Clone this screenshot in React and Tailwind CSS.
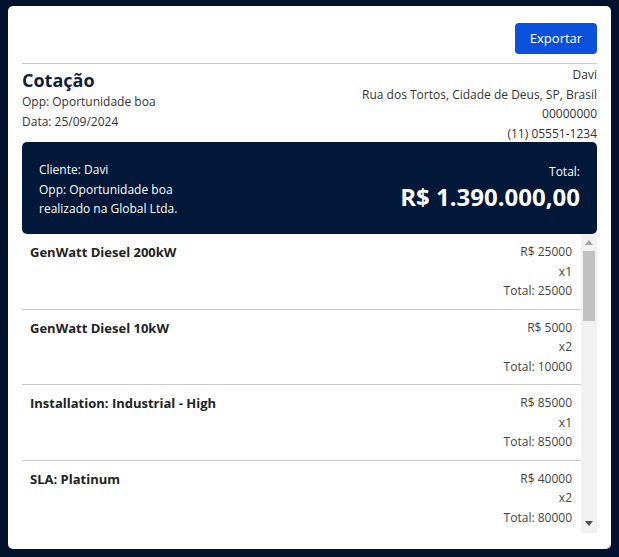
import React from "react";

const items = [
  { name: "GenWatt Diesel 200kW", price: 25000, qty: 1 },
  { name: "GenWatt Diesel 10kW", price: 5000, qty: 2 },
  { name: "Installation: Industrial - High", price: 85000, qty: 1 },
  { name: "SLA: Platinum", price: 40000, qty: 2 },
];

export default function App() {
  return (
    <div
      className="w-[619px] h-[557px] bg-[#01112e] pt-[6px] pl-[8px]"
      style={{ fontFamily: '"Open Sans", "Noto Sans", sans-serif' }}
    >
      <div className="w-[603px] h-[543px] bg-white rounded-[5px] px-[14px] pt-[17px] pb-[14px] flex flex-col">
        <div className="flex justify-end">
          <button className="h-[31px] w-[82px] rounded-[4px] bg-[#0b51db] text-white text-[13px] flex items-center justify-center">
            Exportar
          </button>
        </div>
        <div className="mt-[9px] border-t border-[#cccccc]" />
        <div className="flex justify-between mt-[1px]">
          <div className="flex flex-col">
            <div className="text-[18px] font-bold text-[#0d1f40] leading-[26px] mt-[2px]">Cotação</div>
            <div className="text-[12px] leading-[20px] text-[#333] mt-[-1px]">Opp: Oportunidade boa</div>
            <div className="text-[12px] leading-[20px] text-[#333]">Data: 25/09/2024</div>
          </div>
          <div className="flex flex-col items-end text-[12px] leading-[19.5px] text-[#333]">
            <div>Davi</div>
            <div>Rua dos Tortos, Cidade de Deus, SP, Brasil</div>
            <div>00000000</div>
            <div>(11) 05551-1234</div>
          </div>
        </div>
        <div className="mt-[-1px] h-[92px] bg-[#011839] rounded-[5px] flex justify-between items-center px-[17px] text-white">
          <div className="flex flex-col text-[12px] leading-[19.5px] mt-[3px]">
            <div>Cliente: Davi</div>
            <div>Opp: Oportunidade boa</div>
            <div>realizado na Global Ltda.</div>
          </div>
          <div className="flex flex-col items-end">
            <div className="text-[12px] leading-[18px]">Total:</div>
            <div className="text-[24px] font-bold leading-[32px]">R$ 1.390.000,00</div>
          </div>
        </div>
        <div className="flex-1 min-h-0 flex">
          <div className="flex-1 min-w-0 overflow-hidden">
            {items.map((it, i) => (
              <div
                key={i}
                className={
                  "flex justify-between pl-[8px] pr-[9px] py-[8px]" +
                  (i < items.length - 1 ? " border-b border-[#cccccc]" : "")
                }
              >
                <div className="text-[13px] font-bold text-[#222] leading-[19.5px] mt-[1px]">{it.name}</div>
                <div className="flex flex-col items-end text-[12px] leading-[19.5px] text-[#444]">
                  <div>R$ {it.price}</div>
                  <div>x{it.qty}</div>
                  <div>Total: {it.price * it.qty}</div>
                </div>
              </div>
            ))}
          </div>
          <div className="w-[16px] h-[299px] bg-[#f1f1f1] flex flex-col items-center">
            <div className="h-[16px] flex items-center justify-center">
              <svg width="8" height="5" viewBox="0 0 8 5">
                <polygon points="0,5 8,5 4,0" fill="#a3a3a3" />
              </svg>
            </div>
            <div className="w-[12px] h-[70px] bg-[#c1c1c1] mt-[1px]" />
            <div className="flex-1" />
            <div className="h-[16px] flex items-center justify-center mb-[2px]">
              <svg width="8" height="5" viewBox="0 0 8 5">
                <polygon points="0,0 8,0 4,5" fill="#505050" />
              </svg>
            </div>
          </div>
        </div>
      </div>
    </div>
  );
}
